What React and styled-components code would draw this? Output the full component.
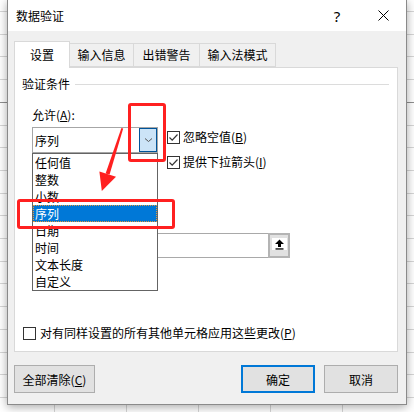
import React from 'react'
import styled, { createGlobalStyle } from 'styled-components'

const GlobalStyle = createGlobalStyle`
  html, body {
    margin: 0;
    height: 100%;
  }
  body {
    font-family: "Noto Sans CJK SC", "Noto Sans", sans-serif;
    font-size: 12px;
    color: #000;
    background-color: #fff;
    background-image:
      linear-gradient(to bottom, transparent 102px, #8f8f8f 102px, #8f8f8f 103px, transparent 103px),
      repeating-linear-gradient(to bottom, transparent 0, transparent 11px, #d6d6d6 11px, #d6d6d6 12px, transparent 12px, transparent 22.7px),
      repeating-linear-gradient(to right, transparent 0, transparent 54px, #d6d6d6 54px, #d6d6d6 55px, transparent 55px, transparent 72px);
    overflow: hidden;
  }
`

const Page = styled.div`
  position: relative;
  width: 414px;
  height: 412px;
`

const Dialog = styled.div`
  box-sizing: border-box;
  margin-left: 7px;
  width: 400px;
  height: 405px;
  background: #f0f0f0;
  border: 1px solid #8a8a8a;
  border-top: none;
  box-shadow: 0 2px 9px rgba(0, 0, 0, 0.35);
  display: flex;
  flex-direction: column;
`

const TitleBar = styled.div`
  height: 31px;
  background: #fff;
  display: flex;
  align-items: center;
  padding-left: 8px;
`

const Title = styled.div`
  flex: 1;
  line-height: 16px;
`

const CaptionButton = styled.div`
  width: 46px;
  height: 31px;
  display: flex;
  align-items: center;
  justify-content: center;
  font-family: "Noto Sans", sans-serif;
  font-size: 15px;
`

const Body = styled.div`
  flex: 1;
  padding: 10px 8px 0 6px;
  display: flex;
  flex-direction: column;
`

const Tabs = styled.div`
  display: flex;
  align-items: flex-end;
  height: 26px;
  position: relative;
  z-index: 2;
`

const Tab = styled.div`
  box-sizing: border-box;
  width: ${p => p.w}px;
  height: ${p => (p.active ? 27 : 24)}px;
  margin-bottom: ${p => (p.active ? -1 : 0)}px;
  margin-left: ${p => (p.first ? 0 : -1)}px;
  border: 1px solid #d9d9d9;
  border-bottom: ${p => (p.active ? 'none' : '1px solid #d9d9d9')};
  background: ${p => (p.active ? '#fff' : '#f0f0f0')};
  display: flex;
  align-items: center;
  justify-content: center;
  line-height: 16px;
`

const Panel = styled.div`
  box-sizing: border-box;
  height: 285px;
  background: #fff;
  border: 1px solid #d9d9d9;
  padding: 8px 8px 10px 7px;
  display: flex;
  flex-direction: column;
`

const Section = styled.div`
  display: flex;
  align-items: center;
  gap: 5px;
  line-height: 16px;
`

const Rule = styled.div`
  flex: 1;
  height: 1px;
  background: #dcdcdc;
`

const Group = styled.div`
  padding-left: 10px;
`

const Label = styled.div`
  line-height: 16px;
  margin-top: ${p => p.mt}px;
`

const AllowRow = styled.div`
  display: flex;
  align-items: flex-start;
  margin-top: 4px;
`

const ComboWrap = styled.div`
  position: relative;
  width: 126px;
`

const Combo = styled.div`
  box-sizing: border-box;
  height: 26px;
  border: 1px solid #a6a6a6;
  background: #fff;
  display: flex;
  align-items: center;
  padding-left: 2px;
`

const ComboText = styled.span`
  flex: 1;
`

const ComboButton = styled.div`
  box-sizing: border-box;
  width: 18px;
  height: 24px;
  background: #cce4f7;
  border: 1px solid #005499;
  display: flex;
  align-items: center;
  justify-content: center;
`

const DropList = styled.div`
  position: absolute;
  top: 100%;
  left: 0;
  width: 126px;
  box-sizing: border-box;
  background: #fff;
  border: 1px solid #646464;
  z-index: 5;
`

const DropItem = styled.div`
  box-sizing: border-box;
  height: 17px;
  line-height: 17px;
  padding-left: 2px;
  background: ${p => (p.selected ? '#0078d7' : 'transparent')};
  color: ${p => (p.selected ? '#fff' : '#000')};
  outline: ${p => (p.selected ? '1px dotted #e59a3c' : 'none')};
  outline-offset: -1px;
`

const Checks = styled.div`
  margin-left: 9px;
  padding-top: 2px;
  display: flex;
  flex-direction: column;
  gap: 9px;
`

const CheckRow = styled.div`
  display: flex;
  align-items: center;
  gap: 3px;
  line-height: 16px;
  margin-left: ${p => p.ml || 0}px;
`

const Box = styled.div`
  box-sizing: border-box;
  width: 13px;
  height: 13px;
  border: 1px solid #333;
  background: #fff;
  display: flex;
  align-items: center;
  justify-content: center;
`

const SourceRow = styled.div`
  display: flex;
  width: 258px;
  height: 25px;
  margin-top: 63px;
`

const SourceInput = styled.div`
  flex: 1;
  border: 1px solid #a9a9a9;
  border-right: none;
  background: #fff;
`

const PickButton = styled.div`
  box-sizing: border-box;
  width: 22px;
  background: #e1e1e1;
  border: 2px solid #b4b4b4;
  display: flex;
  align-items: flex-start;
  justify-content: center;
  padding-top: 3px;
`

const PickIcon = styled.div`
  width: 15px;
  height: 12px;
  background: #fff;
  display: flex;
  align-items: center;
  justify-content: center;
`

const ApplyRow = styled(CheckRow)`
  margin-top: auto;
  gap: 4px;
`

const Footer = styled.div`
  display: flex;
  margin-top: 13px;
  gap: 9px;
`

const Button = styled.div`
  box-sizing: border-box;
  width: ${p => p.w}px;
  height: 28px;
  background: #e1e1e1;
  border: ${p => (p.primary ? '2px solid #0078d7' : '1px solid #adadad')};
  display: flex;
  align-items: center;
  justify-content: center;
  margin-right: ${p => (p.push ? 'auto' : '0')};
`

const Mark = styled.div`
  position: absolute;
  left: ${p => p.x}px;
  top: ${p => p.y}px;
  width: ${p => p.w}px;
  height: ${p => p.h}px;
  box-sizing: border-box;
  border: 3px solid #ff2020;
  border-radius: 3px;
  z-index: 10;
  pointer-events: none;
`

const Arrow = styled.svg`
  position: absolute;
  left: 0;
  top: 0;
  z-index: 10;
  pointer-events: none;
`

const tabs = [
  { label: '设置', w: 56 },
  { label: '输入信息', w: 65 },
  { label: '出错警告', w: 67 },
  { label: '输入法模式', w: 77 },
]

const items = ['任何值', '整数', '小数', '序列', '日期', '时间', '文本长度', '自定义']

const Tick = () => (
  <svg width="11" height="11" viewBox="0 0 11 11">
    <polyline points="1.5,5.5 4.2,8.2 9.5,2.5" fill="none" stroke="#333" strokeWidth="1.2" />
  </svg>
)

const App = () => (
  <Page>
    <GlobalStyle />
    <Dialog>
      <TitleBar>
        <Title>数据验证</Title>
        <CaptionButton>?</CaptionButton>
        <CaptionButton>
          <svg width="11" height="11" viewBox="0 0 11 11">
            <path d="M0.5 0.5 L10.5 10.5 M10.5 0.5 L0.5 10.5" stroke="#000" strokeWidth="1" />
          </svg>
        </CaptionButton>
      </TitleBar>
      <Body>
        <Tabs>
          {tabs.map((t, i) => (
            <Tab key={t.label} w={t.w} active={i === 0} first={i === 0}>
              {t.label}
            </Tab>
          ))}
        </Tabs>
        <Panel>
          <Section>
            <span>验证条件</span>
            <Rule />
          </Section>
          <Group>
            <Label mt={15}>
              允许(<u>A</u>):
            </Label>
            <AllowRow>
              <ComboWrap>
                <Combo>
                  <ComboText>序列</ComboText>
                  <ComboButton>
                    <svg width="9" height="6" viewBox="0 0 9 6">
                      <polyline points="1,1.5 4.5,4.5 8,1.5" fill="none" stroke="#555" strokeWidth="1" />
                    </svg>
                  </ComboButton>
                </Combo>
                <DropList>
                  {items.map(it => (
                    <DropItem key={it} selected={it === '序列'}>
                      {it}
                    </DropItem>
                  ))}
                </DropList>
              </ComboWrap>
              <Checks>
                <CheckRow>
                  <Box>
                    <Tick />
                  </Box>
                  <span>
                    忽略空值(<u>B</u>)
                  </span>
                </CheckRow>
                <CheckRow>
                  <Box>
                    <Tick />
                  </Box>
                  <span>
                    提供下拉箭头(<u>I</u>)
                  </span>
                </CheckRow>
              </Checks>
            </AllowRow>
            <SourceRow>
              <SourceInput />
              <PickButton>
                <PickIcon>
                  <svg width="11" height="11" viewBox="0 0 11 11">
                    <path d="M5.5 0.5 L10 5 L7 5 L7 8 L4 8 L4 5 L1 5 Z" fill="#000" />
                    <rect x="1.5" y="9.3" width="8" height="1.3" fill="#000" />
                  </svg>
                </PickIcon>
              </PickButton>
            </SourceRow>
          </Group>
          <ApplyRow ml={1}>
            <Box />
            <span>
              对有同样设置的所有其他单元格应用这些更改(<u>P</u>)
            </span>
          </ApplyRow>
        </Panel>
        <Footer>
          <Button w={81} push>
            全部清除(<u>C</u>)
          </Button>
          <Button w={74} primary>
            确定
          </Button>
          <Button w={74}>取消</Button>
        </Footer>
      </Body>
    </Dialog>
    <Mark x={128} y={103} w={38} h={59} />
    <Mark x={17} y={199} w={158} h={30} />
    <Arrow width="414" height="412" viewBox="0 0 414 412">
      <polygon points="121.4,128 123.2,128.6 109.6,174.6 105.6,173.4" fill="#ff2020" />
      <polygon points="116,176.8 99.4,171.6 101.8,191" fill="#ff2020" />
    </Arrow>
  </Page>
)

export default App
